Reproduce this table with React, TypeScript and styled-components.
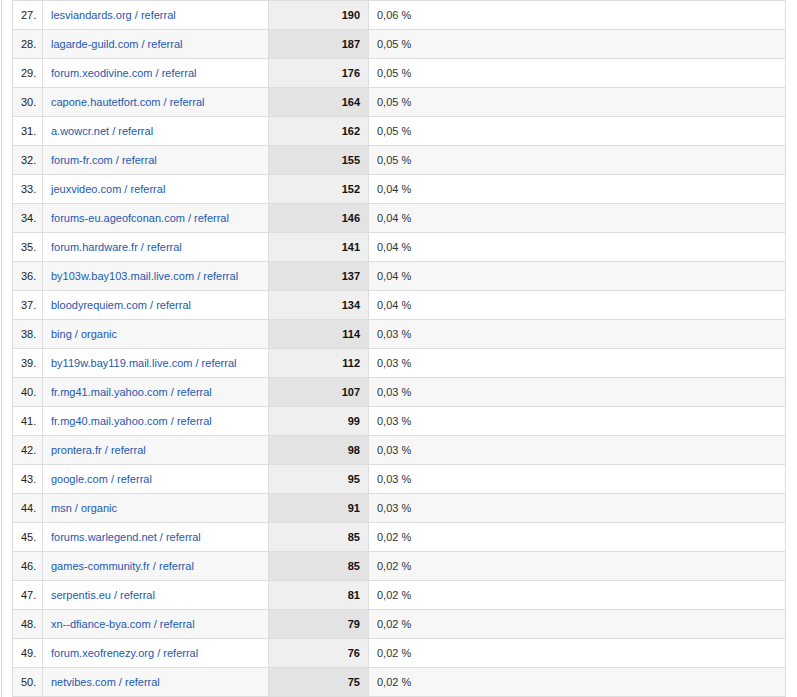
import * as React from "react";
import styled, { createGlobalStyle } from "styled-components";

const GlobalStyle = createGlobalStyle`
  html, body {
    margin: 0;
    padding: 0;
    background: #fff;
  }
  body {
    font-family: Arial, "Liberation Sans", sans-serif;
    font-size: 11px;
  }
`;

const Frame = styled.div`
  margin-left: 1px;
  border-left: 1px solid #d4d4d4;
  padding-left: 10px;
  width: 775px;
`;

const Table = styled.table`
  border-collapse: collapse;
  width: 774px;
  table-layout: fixed;
  border-bottom: 1px solid #c8c8c8;
`;

const Row = styled.tr<{ $alt: boolean }>`
  height: 29px;
  background: ${(p) => (p.$alt ? "#f7f7f7" : "#ffffff")};

  td {
    border: 1px solid #dddddd;
    padding: 0 8px;
    vertical-align: middle;
    white-space: nowrap;
  }
`;

const Index = styled.td`
  width: 13px;
  color: #222;
`;

const Source = styled.td`
  width: 209px;
  a {
    color: #2358b0;
    text-decoration: none;
  }
`;

const Visits = styled.td<{ $alt: boolean }>`
  width: 83px;
  text-align: right;
  font-weight: bold;
  color: #111;
  background: ${(p) => (p.$alt ? "#e3e3e3" : "#efefef")};
`;

const Percent = styled.td`
  color: #333;
`;

const rows: [string, number, string][] = [
  ["lesviandards.org / referral", 190, "0,06 %"],
  ["lagarde-guild.com / referral", 187, "0,05 %"],
  ["forum.xeodivine.com / referral", 176, "0,05 %"],
  ["capone.hautetfort.com / referral", 164, "0,05 %"],
  ["a.wowcr.net / referral", 162, "0,05 %"],
  ["forum-fr.com / referral", 155, "0,05 %"],
  ["jeuxvideo.com / referral", 152, "0,04 %"],
  ["forums-eu.ageofconan.com / referral", 146, "0,04 %"],
  ["forum.hardware.fr / referral", 141, "0,04 %"],
  ["by103w.bay103.mail.live.com / referral", 137, "0,04 %"],
  ["bloodyrequiem.com / referral", 134, "0,04 %"],
  ["bing / organic", 114, "0,03 %"],
  ["by119w.bay119.mail.live.com / referral", 112, "0,03 %"],
  ["fr.mg41.mail.yahoo.com / referral", 107, "0,03 %"],
  ["fr.mg40.mail.yahoo.com / referral", 99, "0,03 %"],
  ["prontera.fr / referral", 98, "0,03 %"],
  ["google.com / referral", 95, "0,03 %"],
  ["msn / organic", 91, "0,03 %"],
  ["forums.warlegend.net / referral", 85, "0,02 %"],
  ["games-community.fr / referral", 85, "0,02 %"],
  ["serpentis.eu / referral", 81, "0,02 %"],
  ["xn--dfiance-bya.com / referral", 79, "0,02 %"],
  ["forum.xeofrenezy.org / referral", 76, "0,02 %"],
  ["netvibes.com / referral", 75, "0,02 %"],
];

export default function App() {
  return (
    <>
      <GlobalStyle />
      <Frame>
        <Table>
          <tbody>
            {rows.map(([source, visits, pct], i) => {
              const alt = i % 2 === 1;
              return (
                <Row key={source} $alt={alt}>
                  <Index>{27 + i}.</Index>
                  <Source>
                    <a href="#">{source}</a>
                  </Source>
                  <Visits $alt={alt}>{visits}</Visits>
                  <Percent>{pct}</Percent>
                </Row>
              );
            })}
          </tbody>
        </Table>
      </Frame>
    </>
  );
}
